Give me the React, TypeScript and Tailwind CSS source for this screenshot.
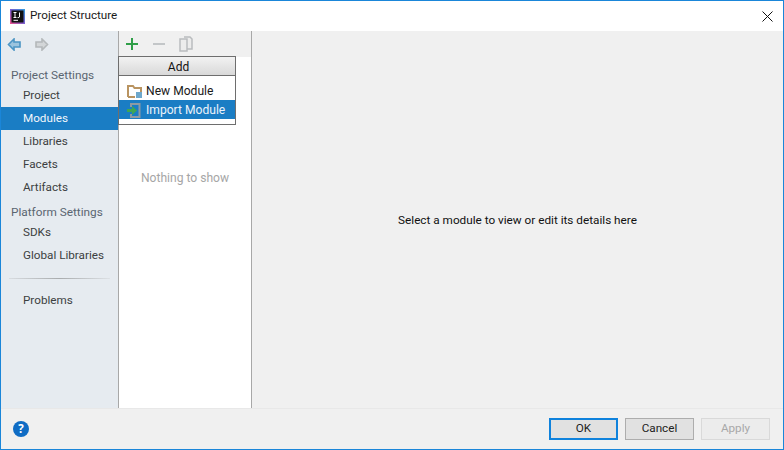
import React from "react";

const Nav = ({ label, active }: { label: string; active?: boolean }) => (
  <div className={`h-[23px] pl-[22px] pt-[1px] flex items-center text-[11.7px] leading-none ${active ? "bg-[#1a7dc4] text-[#f2f7fb]" : "text-[#3c3f41]"}`}>{label}</div>
);
const Head = ({ label, cls }: { label: string; cls: string }) => (
  <div className={`pl-[10px] flex items-center text-[11.8px] leading-none text-[#5a6570] ${cls}`}>{label}</div>
);

export default function App() {
  return (
    <div className="w-[784px] h-[450px] overflow-hidden flex flex-col border border-[#1a86d9] bg-[#f0f0f0] text-black" style={{ fontFamily: 'Roboto,"Open Sans",sans-serif' }}>
      <div className="h-[30px] shrink-0 bg-white flex items-center pl-[9px] pr-[10px]">
        <svg width="15" height="15" viewBox="0 0 15 15" className="shrink-0">
          <defs>
            <linearGradient id="ij" x1="0" y1="1" x2="1" y2="0">
              <stop offset="0" stopColor="#f0528c" />
              <stop offset="0.5" stopColor="#7a5fd0" />
              <stop offset="1" stopColor="#2f9fe0" />
            </linearGradient>
          </defs>
          <rect width="15" height="15" fill="url(#ij)" />
          <rect x="1.500" y="1.500" width="12" height="12" fill="#111" />
          <path d="M3.500 3.500h3M5 3.500v5M3.500 8.500h3M9.500 3.500v4.500q0 .8-2 .6" stroke="#fff" strokeWidth="1" fill="none" />
          <rect x="3.500" y="10.800" width="4.500" height="1" fill="#fff" />
        </svg>
        <span className="ml-[5px] text-[11.7px] leading-none text-[#1a1a1a]">Project Structure</span>
        <svg width="11" height="11" viewBox="0 0 11 11" className="ml-auto">
          <path d="M.5.5l10 10M10.500.5l-10 10" stroke="#111" strokeWidth="1" fill="none" />
        </svg>
      </div>
      <div className="flex h-[377px] shrink-0">
        <div className="w-[117px] shrink-0 bg-[#e6ebf0] flex flex-col">
          <div className="h-[26px] shrink-0 flex items-center pl-[6px] gap-[14px]">
            <svg width="14" height="13" viewBox="0 0 14 13"><path d="M7 1L1.500 6.500 7 12V9h6V4H7z" fill="#9cc4de" stroke="#4c95c4" strokeWidth="1.6" /></svg>
            <svg width="14" height="13" viewBox="0 0 14 13"><path d="M7 1l5.500 5.500L7 12V9H1V4h6z" fill="#d3d6d8" stroke="#b4b8ba" strokeWidth="1.6" /></svg>
          </div>
          <Head label="Project Settings" cls="h-[27px] pt-[11px]" />
          <Nav label="Project" />
          <Nav label="Modules" active />
          <Nav label="Libraries" />
          <Nav label="Facets" />
          <Nav label="Artifacts" />
          <Head label="Platform Settings" cls="h-[22px] pt-[6px]" />
          <Nav label="SDKs" />
          <Nav label="Global Libraries" />
          <div className="mt-[11px] mb-[10px] mx-[8px] h-px bg-gradient-to-r from-[#d8dce0] via-[#a9acae] to-[#dde1e5]" />
          <Nav label="Problems" />
        </div>
        <div className="relative w-[134px] shrink-0 border-x border-[#a8a8a8] bg-white flex flex-col">
          <div className="h-[26px] shrink-0 bg-[#f0f0f0] flex items-center pl-[7px]">
            <svg width="12" height="12" viewBox="0 0 12 12"><path d="M6 0v12M0 6h12" stroke="#2f9e48" strokeWidth="2" /></svg>
            <svg width="12" height="12" viewBox="0 0 12 12" className="ml-[15px]"><path d="M0 6h12" stroke="#c3c6c8" strokeWidth="2" /></svg>
            <svg width="14" height="16" viewBox="0 0 14 16" className="ml-[14px]"><path d="M1 3h7v12H1zM5 1h6l2 2v10H8" fill="#ececec" stroke="#b9bcbe" strokeWidth="1.500" /></svg>
          </div>
          <div className="flex-1 flex justify-center pt-[112px] text-[12.1px] leading-[18px] text-[#a6a6a6]">Nothing to show</div>
          <div className="absolute left-[-1px] top-[25px] w-[118px] h-[69px] border border-[#6e6e6e] bg-white flex flex-col">
            <div className="h-[19px] shrink-0 pt-[1px] pl-[3px] border-b border-[#6e6e6e] bg-gradient-to-b from-[#f2f2f2] to-[#d9d9d9] flex items-center justify-center text-[12px] leading-none text-[#111]">Add</div>
            <div className="h-[5px] shrink-0" />
            <div className="h-[19px] shrink-0 pt-[1px] flex items-center pl-[8px] gap-[4px] text-[12.1px] leading-none text-[#1a1a1a]">
              <svg width="15" height="15" viewBox="0 0 15 15" className="shrink-0">
                <path d="M1 13V2h5l1.500 2H14v4" fill="none" stroke="#b99461" strokeWidth="2" />
                <path d="M1 13h7" stroke="#b99461" strokeWidth="2" />
                <rect x="9" y="8" width="6" height="6" fill="#6ea8cc" />
              </svg>
              New Module
            </div>
            <div className="h-[19px] shrink-0 pt-[1px] bg-[#1a7dc4] flex items-center pl-[8px] gap-[4px] text-[12.1px] leading-none text-[#eaf3fa]">
              <svg width="15" height="15" viewBox="0 0 15 15" className="shrink-0">
                <path d="M4 4V1h8.500v13H4v-3" fill="none" stroke="#8d9aa3" strokeWidth="2" />
                <path d="M0 6h5V3l5 4.500L5 12V9H0z" fill="#3fa653" />
              </svg>
              Import Module
            </div>
          </div>
        </div>
        <div className="flex-1 bg-[#f0f0f0] flex justify-center pt-[180px] text-[11.75px] leading-[18px] text-[#111]">Select a module to view or edit its details here</div>
      </div>
      <div className="flex-1 flex items-center pl-[12px] pr-[13px] border-t border-[#e8e8e8] bg-[#f0f0f0]">
        <svg width="16" height="16" viewBox="0 0 16 16">
          <circle cx="8" cy="8" r="8" fill="#0f6cc4" />
          <text x="8" y="12" textAnchor="middle" fontSize="11.5" fontWeight="700" fill="#fff" fontFamily="Open Sans">?</text>
        </svg>
        <div className="ml-auto flex gap-[7px] text-[11.7px] leading-none">
          <div className="w-[69px] h-[22px] border-2 border-[#0f82dc] bg-[#e1e1e1] flex items-center justify-center text-[#222]">OK</div>
          <div className="w-[69px] h-[22px] border border-[#adadad] bg-[#e1e1e1] flex items-center justify-center text-[#222]">Cancel</div>
          <div className="w-[69px] h-[22px] border border-[#d9d9d9] bg-[#ececec] flex items-center justify-center text-[#a8a8a8]">Apply</div>
        </div>
      </div>
    </div>
  );
}
